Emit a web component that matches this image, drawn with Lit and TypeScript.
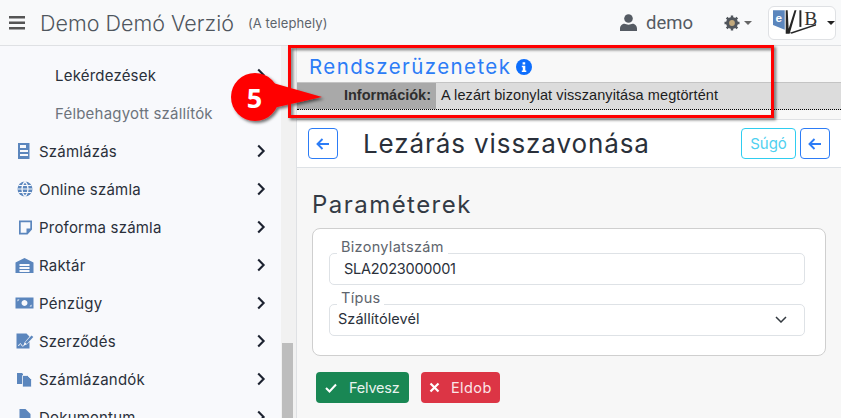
import { LitElement, html, css, svg } from "lit";
import { customElement } from "lit/decorators.js";

const chevron = html`<svg class="chev" viewBox="0 0 10 14"><path d="M2.2 1.6 7.6 7l-5.4 5.4" fill="none" stroke="#1c2230" stroke-width="2.1"/></svg>`;
const ic = (p: unknown) => html`<svg class="ico" viewBox="0 0 18 18" fill="#5b86bd">${p}</svg>`;
const items: [string, unknown][] = [
  ["Számlázás", svg`<path fill-rule="evenodd" d="M3 1h11.500v16H3zM5 3v3h6V3zM5 8v2h8V8zM5 12v2h8v-2z" transform="translate(-.5 0)"/>`],
  ["Online számla", svg`<circle cx="9.500" cy="9" r="7.500"/><path d="M2 9h15M9.500 1.500c-4 4-4 11 0 15M9.500 1.500c4 4 4 11 0 15M3 5.500h13M3 12.500h13" stroke="#f8f9fc" stroke-width="1.100" fill="none"/>`],
  ["Proforma számla", svg`<path fill-rule="evenodd" d="M3.500 2.500h13v9l-4.500 5h-8.500zM5.200 4.300v10.500h5.800v-4.300h3.800V4.300z"/>`],
  ["Raktár", svg`<path fill-rule="evenodd" d="M0 6.500 9 2l9 4.500V17H0zM4 8h10v2H4zm0 3h10v2H4zm0 3h10v2H4z"/>`],
  ["Pénzügy", svg`<path fill-rule="evenodd" d="M0 3.500h18v11H0zM9 6a3 3 0 1 0 .01 0zM2 5.500h2L2 7.500zM16 12.500h-2l2-2z"/>`],
  ["Szerződés", svg`<path d="M1 1.500h10l3 3-5 6-1 3 3-1 3-2.500v6.500H1z"/><path d="M9.500 10.500 16 3.500l1.800 1.500-6.500 7z"/><path d="M3 14c1.500-3 2-3 3-1s1.500 1 3 0" stroke="#f8f9fc" fill="none"/>`],
  ["Számlázandók", svg`<path d="M1.500 3h5l1 1v10h-6z"/><path d="M7 5.500h5l4 4v7.500H7z" stroke="#f8f9fc" stroke-width=".8"/>`],
  ["Dokumentum", svg`<path d="M4 1h6l5 5v11H4z"/>`],
];

@customElement("app-root")
export class AppRoot extends LitElement {
  static styles = css`
    :host { display: block; width: 841px; height: 418px; overflow: hidden; position: relative; background: #f7f7f7; font-family: Inter, "Open Sans", sans-serif; color: #2a303a; }
    .top { height: 46px; box-sizing: border-box; background: #f8f9fa; border-bottom: 1px solid #dfe1e4; display: flex; align-items: center; padding-left: 9px; color: #5d646c; }
    .burger { width: 17px; height: 14px; margin-right: 14px; }
    .brand { font-size: 21.500px; letter-spacing: 0; white-space: nowrap; font-weight: 300; color: #4f565e; }
    .site { font-size: 13px; margin-left: 14px; white-space: nowrap; letter-spacing: 0.1px; }
    .user { margin-left: auto; display: flex; align-items: center; gap: 9px; font-family: Roboto, sans-serif; font-size: 18.500px; color: #555b63; }
    .gear { display: flex; align-items: center; gap: 4px; margin: 0 16px 0 31px; }
    .caret { border: 4px solid transparent; border-top-color: #666; border-bottom: 0; width: 0; height: 0; }
    .logo { width: 68px; height: 34px; box-sizing: border-box; background: #fff; border: 1px solid #dfe1e4; border-radius: 6px; display: flex; align-items: center; margin-right: 5px; padding-left: 4px; gap: 9px; }
    .logo .caret { border-top-color: #222; }
    .body { display: flex; height: 372px; }
    .side { width: 281px; flex: none; background: #f8f9fc; padding-top: 10px; box-sizing: border-box; overflow: hidden; }
    .row { height: 38px; display: flex; align-items: center; font-size: 15px; letter-spacing: .2px; padding-right: 15px; white-space: nowrap; }
    .row span { flex: 1; }
    .sub { padding-left: 55px; }
    .muted { color: #6d747c; }
    .main-row { padding-left: 15px; }
    .ico { width: 19px; height: 18px; margin-right: 5px; flex: none; }
    .chev { width: 10px; height: 14px; flex: none; }
    .track { width: 16px; flex: none; background: #f1f1f1; border-right: 1px solid #dfe1e4; box-sizing: border-box; display: flex; flex-direction: column; justify-content: flex-end; padding: 0 3px 0 1px; }
    .thumb { height: 75px; background: #bdbdbd; }
    .main { flex: 1; min-width: 0; }
    .msgs { height: 74px; background: #f8f8f8; box-sizing: border-box; padding: 8px 0 0 0; border-bottom: 1px solid #dfe1e4; }
    .msgs h2 { margin: 0 0 0 12px; font-weight: 400; font-size: 20.500px; letter-spacing: 1.400px; color: #2c7cf6; display: flex; align-items: center; gap: 5px; height: 26px; line-height: 26px; }
    .bar { margin-top: 2px; height: 26px; border-top: 1px solid #c4c4c4; border-bottom: 1px dotted #000; display: flex; background: #dcdcdc; font-family: "Liberation Sans", sans-serif; font-size: 14.500px; line-height: 24px; color: #1d1d1d; }
    .lab { width: 139px; box-sizing: border-box; text-align: right; padding-right: 5px; background: #a9a9a9; font-weight: 700; color: #2e2e2e; }
    .msg { padding-left: 5px; letter-spacing: .09px; }
    .head { height: 48px; background: #fff; border-bottom: 1px solid #dee2e6; display: flex; align-items: center; padding: 0 11px 0 11px; box-sizing: border-box; }
    .head h1 { margin: 0 0 0 25px; font-weight: 400; font-size: 26px; letter-spacing: .9px; flex: 1; color: #2a303a; white-space: nowrap; }
    .btn { height: 31px; box-sizing: border-box; border: 1px solid #2c7cf6; border-radius: 4px; display: flex; align-items: center; justify-content: center; width: 30px; background: #fff; }
    .help { width: 55px; border-color: #2fcdf0; color: #4fd0f0; font-size: 15px; margin-right: 4px; }
    .content { padding: 0 15px; }
    .content h3 { margin: 23px 0 9px; font-weight: 400; font-size: 24px; letter-spacing: 1.460px; height: 28px; line-height: 28px; color: #333a44; white-space: nowrap; }
    .card { width: 514px; height: 128px; box-sizing: border-box; background: #fff; border: 1px solid #cfcfcf; border-radius: 8px; padding: 24px 20px 0 16px; display: flex; flex-direction: column; gap: 19px; }
    .field { position: relative; height: 32px; box-sizing: border-box; border: 1px solid #dee2e6; border-radius: 5px; font-size: 14.500px; letter-spacing: -.25px; display: flex; align-items: center; justify-content: space-between; padding: 0 17px 2px 14px; }
    .tp { padding-left: 8px; padding-bottom: 3px; letter-spacing: .05px; }
    .field label { position: absolute; left: 7px; top: -15px; background: #fff; padding: 0 4px; font-size: 14.500px; line-height: 16px; color: #5e656d; letter-spacing: .3px; }
    .field.tp label { left: 7px; }
    .field svg { margin-top: 2px; }
    .actions { display: flex; gap: 12px; margin: 16px 0 0 4px; }
    .act { height: 31px; border-radius: 4px; color: #e8f2ee; display: flex; align-items: center; font-size: 14.500px; box-sizing: border-box; }
    .ok { width: 93px; background: #198754; padding-left: 9px; gap: 12px; letter-spacing: -.2px; }
    .no { width: 79px; background: #dc3545; padding-left: 8px; gap: 11px; color: #fbe5e7; letter-spacing: .4px; }
    .overlay { position: absolute; left: 0; top: 0; pointer-events: none; }
    .num { position: absolute; left: 231px; top: 74px; width: 47px; height: 46px; display: flex; align-items: center; justify-content: center; color: #fff; font: 700 27px "Open Sans", sans-serif; }
  `;

  render() {
    return html`
      <div class="top">
        <svg class="burger" viewBox="0 0 17 14" fill="#555"><rect y="0" width="16" height="2.500"/><rect y="5.500" width="16" height="2.500"/><rect y="11" width="16" height="2.500"/></svg>
        <div class="brand">Demo Demó Verzió</div>
        <div class="site">(A telephely)</div>
        <div class="user">
          <svg width="17" height="17" viewBox="0 0 17 17" fill="#555b63"><circle cx="8.500" cy="4.500" r="4.300"/><path d="M0 17v-2.500C0 11.500 2.500 9.800 4.500 9.800c1 .4 2.500.9 4 .9s3-.5 4-.9c2 0 4.500 1.700 4.500 4.700V17z"/></svg>
          demo
        </div>
        <div class="gear">
          <svg width="16" height="16" viewBox="0 0 16 16"><circle cx="8" cy="8" r="4.500" fill="none" stroke="#51565c" stroke-width="3"/><path d="M8 .5v15M.5 8h15M2.700 2.700l10.600 10.600M13.300 2.700 2.700 13.300" stroke="#51565c" stroke-width="2.400"/><circle cx="8" cy="8" r="2.900" fill="#c2a97c"/></svg>
          <i class="caret"></i>
        </div>
        <div class="logo">
          <svg width="46" height="27" viewBox="0 0 46 27">
            <path d="M0 1h12v20L0 16z" fill="#5b86bd"/>
            <text x="2.500" y="13" font-size="12" font-weight="700" fill="#fff" font-family="Liberation Sans">e</text>
            <path d="M13 1h2l1 19L22 1h2l-7 24h-4z" fill="#262626"/>
            <path d="M27 1h2v17h-2z" fill="#262626"/>
            <text x="32" y="16" font-size="20" fill="#333" font-family="Liberation Serif">B</text>
            <path d="M17 24l27-9v1.500L19 25z" fill="#262626"/>
          </svg>
          <i class="caret"></i>
        </div>
      </div>
      <div class="body">
        <div class="side">
          <div class="row sub"><span>Lekérdezések</span>${chevron}</div>
          <div class="row sub muted"><span>Félbehagyott szállítók</span></div>
          ${items.map(([t, p]) => html`<div class="row main-row">${ic(p)}<span>${t}</span>${chevron}</div>`)}
        </div>
        <div class="track"><div class="thumb"></div></div>
        <div class="main">
          <div class="msgs">
            <h2>Rendszerüzenetek
              <svg width="16" height="16" viewBox="0 0 16 16"><circle cx="8" cy="8" r="8" fill="#0d6efd"/><path d="M6.600 3.200h2.600v2.300H6.600zM5.800 6.800h3.500v4.800h1v1.400H5.800v-1.400h1V8.200h-1z" fill="#fff"/></svg>
            </h2>
            <div class="bar"><div class="lab">Információk:</div><div class="msg">A lezárt bizonylat visszanyitása megtörtént</div></div>
          </div>
          <div class="head">
            <div class="btn"><svg width="14" height="12" viewBox="0 0 14 12"><path d="M6.500 1 1.500 6l5 5M2 6h11" fill="none" stroke="#2c7cf6" stroke-width="1.900"/></svg></div>
            <h1>Lezárás visszavonása</h1>
            <div class="btn help">Súgó</div>
            <div class="btn"><svg width="14" height="12" viewBox="0 0 14 12"><path d="M6.500 1 1.500 6l5 5M2 6h11" fill="none" stroke="#2c7cf6" stroke-width="1.900"/></svg></div>
          </div>
          <div class="content">
            <h3>Paraméterek</h3>
            <div class="card">
              <div class="field"><label>Bizonylatszám</label>SLA2023000001</div>
              <div class="field tp"><label>Típus</label>Szállítólevél
                <svg width="12" height="7" viewBox="0 0 12 7"><path d="M1 1l5 5 5-5" fill="none" stroke="#343a40" stroke-width="1.500"/></svg>
              </div>
            </div>
            <div class="actions">
              <div class="act ok"><svg width="12" height="10" viewBox="0 0 12 10"><path d="M1 5l3.500 3.500L11 1.500" fill="none" stroke="#fff" stroke-width="2"/></svg>Felvesz</div>
              <div class="act no"><svg width="11" height="11" viewBox="0 0 11 11"><path d="M1.500 1.500l8 8m0-8-8 8" fill="none" stroke="#fff" stroke-width="2.200"/></svg>Eldob</div>
            </div>
          </div>
        </div>
      </div>
      <svg class="overlay" width="841" height="418" viewBox="0 0 841 418">
        <defs><filter id="s" x="-10%" y="-10%" width="125%" height="125%"><feDropShadow dx="2" dy="2" stdDeviation="1.500" flood-color="#000" flood-opacity=".55"/></filter></defs>
        <g filter="url(#s)">
          <rect x="289.500" y="46.500" width="483" height="70" fill="none" stroke="#f00" stroke-width="3"/>
          <path d="M273 83 322 97 273 108z" fill="#f00"/>
          <circle cx="255" cy="97" r="24" fill="#f00"/>
        </g>
      </svg>
      <div class="num">5</div>
    `;
  }
}
